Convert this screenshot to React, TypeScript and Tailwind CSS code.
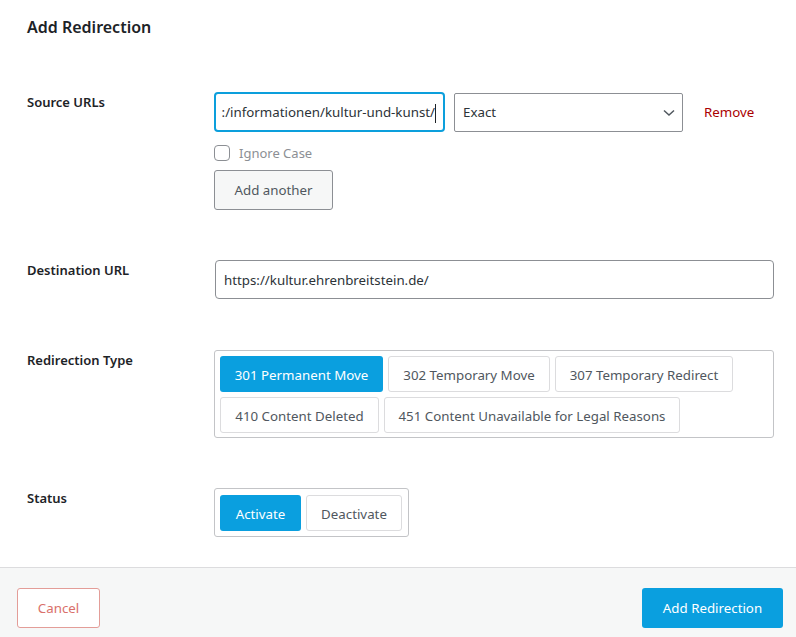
import React from "react";

const typeButtons = [
  { label: "301 Permanent Move", w: "w-[163px]", active: true },
  { label: "302 Temporary Move", w: "w-[162px]", active: false },
  { label: "307 Temporary Redirect", w: "w-[178px]", active: false },
  { label: "410 Content Deleted", w: "w-[159px]", active: false },
  { label: "451 Content Unavailable for Legal Reasons", w: "w-[296px]", active: false },
];

export default function App() {
  return (
    <div
      className="w-[796px] h-[637px] bg-white flex flex-col overflow-hidden text-[#1d2327]"
      style={{ fontFamily: '"Noto Sans", "Open Sans", sans-serif' }}
    >
      <div className="flex-1 pl-[27px]">
        <h1 className="mt-[15px] text-[16px] leading-[24px] font-semibold text-[#1d2327]">Add Redirection</h1>

        {/* Source URLs */}
        <div className="flex mt-[53px]">
          <div className="w-[187px] shrink-0 text-[13px] leading-[20px] font-semibold">Source URLs</div>
          <div className="flex flex-col">
            <div className="flex items-center h-[40px]">
              <div className="w-[231px] shrink-0 h-[40px] border-2 border-[#0c9fdc] rounded-[4px] flex items-center justify-end pr-[7px] pt-[2px] overflow-hidden text-[13.3px] text-[#2c3338] whitespace-nowrap">
                <span>:/informationen/kultur-und-kunst/</span>
                <span className="inline-block w-[1px] h-[19px] bg-[#1d2327] shrink-0" />
              </div>
              <div className="ml-[9px] w-[229px] shrink-0 h-[39px] border border-[#8c8f94] rounded-[2px] flex items-center justify-between pl-[8px] pr-[7px] pt-[2px] text-[13.3px] text-[#2c3338]">
                <span>Exact</span>
                <svg width="12" height="8" viewBox="0 0 12 8" fill="none">
                  <path d="M1 1.5 L6 6 L11 1.5" stroke="#50575e" strokeWidth="1.5" />
                </svg>
              </div>
              <span className="ml-[21px] pt-[2px] text-[13.3px] text-[#a00]">Remove</span>
            </div>
            <div className="flex items-center mt-[13px] h-[16px] leading-[16px]">
              <span className="w-[16px] h-[16px] border border-[#8c8f94] rounded-[4px] bg-white" />
              <span className="ml-[9px] text-[13px] text-[#8c8f94]">Ignore Case</span>
            </div>
            <div className="mt-[9px] w-[119px] h-[40px] border border-[#8c8f94] rounded-[3px] bg-[#f6f7f7] flex items-center justify-center pt-[2px] text-[13.3px] text-[#50575e]">
              Add another
            </div>
          </div>
        </div>

        {/* Destination URL */}
        <div className="flex mt-[50px]">
          <div className="w-[188px] shrink-0 text-[13px] leading-[20px] font-semibold">Destination URL</div>
          <div className="w-[559px] shrink-0 h-[39px] border border-[#8c8f94] rounded-[4px] flex items-center pl-[8px] pt-[2px] text-[13.3px] text-[#2c3338]">
            https://kultur.ehrenbreitstein.de/
          </div>
        </div>

        {/* Redirection Type */}
        <div className="flex mt-[51px]">
          <div className="w-[187px] shrink-0 text-[13px] leading-[20px] font-semibold">Redirection Type</div>
          <div className="w-[560px] shrink-0 h-[88px] border border-[#c3c4c7] rounded-[3px] pt-[5px] pl-[5px] flex flex-wrap content-start gap-[5px]">
            {typeButtons.map((b) => (
              <div
                key={b.label}
                className={
                  b.active
                    ? `${b.w} h-[36px] rounded-[3px] bg-[#0a9fdf] text-white text-[13.3px] pt-[3px] flex items-center justify-center`
                    : `${b.w} h-[36px] rounded-[3px] border border-[#dcdcde] bg-white text-[#50575e] text-[13.3px] pt-[3px] flex items-center justify-center`
                }
              >
                {b.label}
              </div>
            ))}
          </div>
        </div>

        {/* Status */}
        <div className="flex mt-[50px]">
          <div className="w-[187px] shrink-0 text-[13px] leading-[20px] font-semibold">Status</div>
          <div className="w-[195px] shrink-0 h-[49px] border border-[#c3c4c7] rounded-[3px] pt-[6px] pl-[5px] flex gap-[5px]">
            <div className="w-[81px] h-[36px] rounded-[3px] bg-[#0a9fdf] text-white text-[13.3px] pt-[3px] flex items-center justify-center">
              Activate
            </div>
            <div className="w-[96px] h-[36px] rounded-[3px] border border-[#dcdcde] bg-white text-[#50575e] text-[13.3px] pt-[3px] flex items-center justify-center">
              Deactivate
            </div>
          </div>
        </div>
      </div>

      {/* Footer */}
      <div className="h-[70px] shrink-0 border-t border-[#dcdcde] bg-[#f6f7f7] flex items-start justify-between pl-[17px] pr-[13px] pt-[20px]">
        <div className="w-[83px] h-[40px] border border-[#e39d98] rounded-[3px] bg-white flex items-center justify-center pt-[2px] text-[13.3px] text-[#d9706a]">
          Cancel
        </div>
        <div className="w-[141px] h-[40px] rounded-[3px] bg-[#0a9fdf] flex items-center justify-center pt-[2px] text-[13.3px] text-white">
          Add Redirection
        </div>
      </div>
    </div>
  );
}
